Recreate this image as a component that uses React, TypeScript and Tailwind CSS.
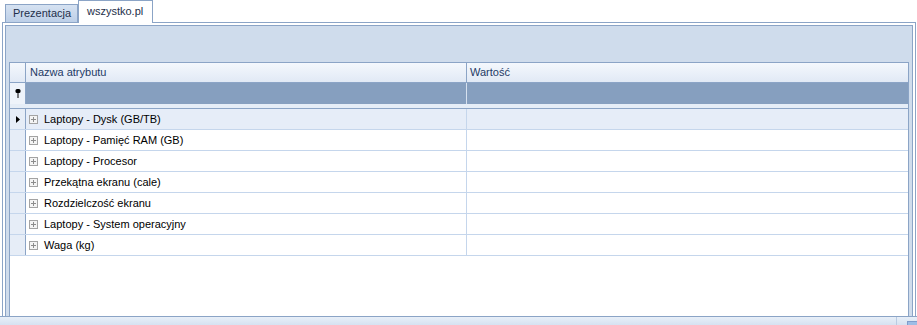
const rows = [
  'Laptopy - Dysk (GB/TB)',
  'Laptopy - Pamięć RAM (GB)',
  'Laptopy - Procesor',
  'Przekątna ekranu (cale)',
  'Rozdzielczość ekranu',
  'Laptopy - System operacyjny',
  'Waga (kg)',
]

function ExpandBox() {
  return (
    <svg width="9" height="9" viewBox="0 0 9 9" className="shrink-0">
      <rect x="0.5" y="0.5" width="8" height="8" fill="#f4f4f4" stroke="#a3a3a3" />
      <path d="M2 4.5h5M4.5 2v5" stroke="#8c8c8c" strokeWidth="1" />
    </svg>
  )
}

function PinIcon() {
  return (
    <svg width="6" height="9" viewBox="0 0 6 9">
      <rect x="0.5" y="0" width="5" height="4" rx="1.5" fill="#000" />
      <rect x="2.5" y="3" width="1" height="6" fill="#000" />
    </svg>
  )
}

function RowArrow() {
  return (
    <svg width="4" height="7" viewBox="0 0 4 7">
      <path d="M0 0L4 3.5L0 7Z" fill="#000" />
    </svg>
  )
}

export default function App() {
  return (
    <div
      className="w-[917px] h-[325px] bg-white overflow-hidden flex flex-col text-[11px] text-black"
      style={{ fontFamily: '"Liberation Sans", Arial, sans-serif' }}
    >
      {/* tabs */}
      <div className="h-[22px] flex items-end pl-[5px] shrink-0 relative z-10">
        <div className="h-[18px] w-[73px] border border-b-0 border-[#8ba4c6] bg-gradient-to-b from-[#d6e2f1] to-[#bccfe8] flex items-center pl-[7px] text-[#1e2f4a]">
          Prezentacja
        </div>
        <div className="h-[23px] w-[75px] -mb-px border border-b-0 border-[#8ba4c6] bg-white flex items-center pl-[8px] pb-px text-[#1e2f4a]">
          wszystko.pl
        </div>
      </div>

      {/* frame */}
      <div className="ml-[2px] w-[914px] h-[294px] shrink-0 border border-b-0 border-[#8ba4c6] bg-white px-[2px] pt-[2px] flex flex-col">
        <div className="flex-1 border border-b-0 border-[#8ba4c6] bg-[#cfdcec] px-[3px] pt-[36px] flex flex-col">
          {/* grid */}
          <div className="flex-1 border border-b-0 border-[#8ba4c6] bg-white flex flex-col">
            {/* header */}
            <div className="h-[20px] flex border-b border-[#8ba4c6] bg-gradient-to-b from-[#f4f8fd] to-[#e1e9f5] text-[#1e3a66]">
              <div className="w-[16px] border-r border-[#8ba4c6]" />
              <div className="w-[441px] border-r border-[#8ba4c6] flex items-center pl-[4px]">Nazwa atrybutu</div>
              <div className="flex-1 flex items-center pl-[3px]">Wartość</div>
            </div>
            {/* filter row */}
            <div className="h-[21px] flex bg-[#869fbf]">
              <div className="w-[16px] border-r border-[#8ba4c6] bg-[#eef3fa] flex items-center justify-center">
                <PinIcon />
              </div>
              <div className="w-[441px] border-r border-[#d6e1ef]" />
              <div className="flex-1" />
            </div>
            <div className="h-[5px] bg-[#e5edf7] border-b border-[#8ba4c6]" />
            {/* data rows */}
            {rows.map((r, i) => (
              <div
                key={r}
                className={`h-[21px] flex border-b border-[#c5d6ec] ${i === 0 ? 'bg-[#e6edf8]' : 'bg-white'}`}
              >
                <div className="w-[16px] border-r border-[#8ba4c6] bg-[#e6edf7] flex items-center justify-center">
                  {i === 0 && <RowArrow />}
                </div>
                <div className="w-[441px] border-r border-[#c5d6ec] flex items-center pl-[3px] gap-[6px]">
                  <ExpandBox />
                  <span>{r}</span>
                </div>
                <div className="flex-1" />
              </div>
            ))}
            <div className="flex-1" />
          </div>
        </div>
      </div>

      {/* bottom bar */}
      <div className="flex-1 border-t border-[#8ba4c6] bg-gradient-to-b from-[#e8eff8] to-[#d6e2f1] flex justify-end">
        <div className="w-px bg-[#b9cbe2] mr-[10px]" />
        <div className="w-[10px] mt-[4px] bg-[#9dbde6] border-t border-l border-[#7f9ccb]" />
      </div>
    </div>
  )
}
